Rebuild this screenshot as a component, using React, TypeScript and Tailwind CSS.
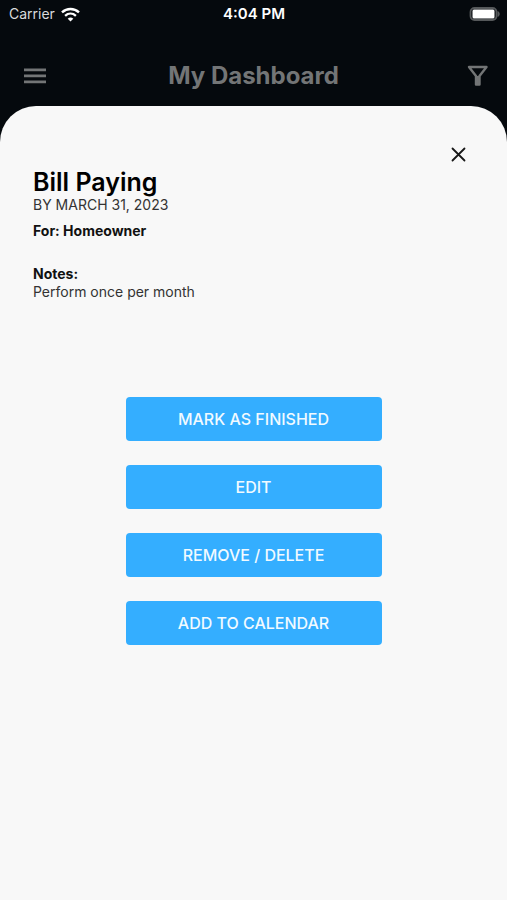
const actions = ["Mark as finished", "Edit", "Remove / Delete", "Add to calendar"];

function StatusBar() {
  return (
    <div className="grid h-7 grid-cols-[1fr_auto_1fr] items-center pl-2 pr-[7px] text-white">
      <div className="flex items-center gap-[6px] pl-px text-sm text-[#d9dbdc]">
        <span>Carrier</span>
        <svg width="19" height="15" viewBox="0 0 19 15" fill="none" stroke="#fff" strokeWidth="2.4" aria-hidden="true">
          <path d="M1 5.4C5.9.8 13.1.8 18 5.4" />
          <path d="M4.1 8.8c3.2-2.9 7.6-2.9 10.8 0" />
          <path d="M6.7 11.7c1.7-1.6 3.9-1.6 5.600 0L9.500 14.500z" fill="#fff" stroke="none" />
        </svg>
      </div>
      <time className="text-center text-[15px] font-semibold leading-5">4:04 PM</time>
      <svg className="justify-self-end" width="31" height="15" viewBox="0 0 31 15" aria-hidden="true">
        <rect x="1.500" y="1" width="26" height="12" rx="4" fill="none" stroke="#55585a" strokeWidth="1.8" />
        <rect x="3.500" y="2.500" width="22" height="9" rx="1.500" fill="#fff" />
        <path d="M28.500 4c3 1.300 3 4.700 0 6z" fill="#55585a" />
      </svg>
    </div>
  );
}

function Header() {
  return (
    <header className="grid h-[78px] grid-cols-[1fr_auto_1fr] items-center px-[18px] pt-[18px] text-[#737576]">
      <button type="button" aria-label="Open menu" className="justify-self-start pl-[6px]">
        <svg width="23" height="16" viewBox="0 0 23 16" fill="currentColor">
          <path d="M0 .5h22v2.800H0zM0 6.500h22v2.800H0zM0 12.500h22v2.800H0z" />
        </svg>
      </button>
      <h1 className="text-2xl font-bold">My Dashboard</h1>
      <button type="button" aria-label="Filter" className="justify-self-end">
        <svg width="22" height="22" viewBox="0 0 22 22" fill="none" stroke="currentColor" strokeWidth="2.4" strokeLinejoin="round">
          <path d="M2 2h17.500l-7 9v8.500h-3.500V11z" />
          <path d="M10.750 11v8" />
        </svg>
      </button>
    </header>
  );
}

export default function App() {
  return (
    <div className="flex min-h-screen flex-col bg-[#05090d] font-['Inter','Liberation_Sans',sans-serif]">
      <StatusBar />
      <Header />
      <main className="flex grow flex-col rounded-t-[36px] bg-[#f8f8f8] px-[33px] pt-9 text-[#111]">
        <div className="flex justify-end pr-[3px]">
          <button type="button" aria-label="Close" className="p-1">
            <svg width="17" height="17" viewBox="0 0 17 17" fill="none" stroke="#171717" strokeWidth="1.8" strokeLinecap="round">
              <path d="M2.500 2.500l12 12M14.500 2.500l-12 12" />
            </svg>
          </button>
        </div>
        <h2 className="mt-px text-[25px] font-semibold leading-7 text-black">Bill Paying</h2>
        <p className="text-sm leading-[18px] text-[#333]">BY MARCH 31, 2023</p>
        <p className="mt-2 text-sm font-bold leading-[18px]">For: Homeowner</p>
        <h3 className="mt-[25px] text-sm font-bold leading-[18px]">Notes:</h3>
        <p className="text-sm leading-[18px] text-[#333]">Perform once per month</p>
        <div className="mt-24 flex flex-col items-center gap-6 pb-6">
          {actions.map((label) => (
            <button
              key={label}
              type="button"
              className="h-11 w-64 rounded bg-[#34aeff] text-base font-medium uppercase text-[#f1faff]"
            >
              {label}
            </button>
          ))}
        </div>
      </main>
    </div>
  );
}
